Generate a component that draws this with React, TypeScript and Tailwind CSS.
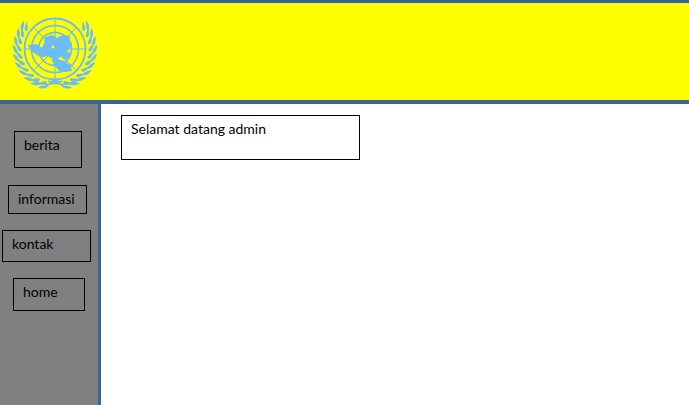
import React from 'react';

const BLUE = '#6cbcf5';
const CX = 55;
const CY = 46;

const polar = (r: number, deg: number) => {
  const rad = (deg * Math.PI) / 180;
  return `${CX + r * Math.cos(rad)} ${CY + r * Math.sin(rad)}`;
};

// one laurel branch, drawn on the left and mirrored for the right
const Branch: React.FC = () => {
  const angles = [106, 118, 130, 142, 154, 166, 178, 190, 202, 214];
  return (
    <g fill={BLUE}>
      {angles.map((a) => (
        <g key={a}>
          <path d={`M${polar(34, a)}Q${polar(36.5, a - 3)} ${polar(38, a + 8)}Q${polar(35.5, a + 5)} ${polar(34, a)}Z`} stroke={BLUE} strokeWidth={1.4} />
          <path d={`M${polar(38, a - 4)}Q${polar(41, a - 2)} ${polar(41.5, a + 6)}Q${polar(39.5, a + 4)} ${polar(38, a - 4)}Z`} stroke={BLUE} strokeWidth={1.4} />
        </g>
      ))}
    </g>
  );
};

const Emblem: React.FC = () => {
  const spokes = [0, 45, 90, 135, 180, 225, 270, 315];
  return (
    <svg width="110" height="96" viewBox="0 0 110 96" className="block">
      <Branch />
      <g transform="translate(110 0) scale(-1 1)">
        <Branch />
      </g>
      {/* stems crossing under the globe */}
      <path d="M32 77Q46 85 62 78M78 77Q64 85 48 78M45 85Q50 79 60 76M65 85Q60 79 50 76" fill="none" stroke={BLUE} strokeWidth={1.6} />
      <g fill="none" stroke={BLUE}>
        <circle cx={CX} cy={CY} r={30.5} strokeWidth={1.8} />
        <circle cx={CX} cy={CY} r={23.5} strokeWidth={1.6} />
        <circle cx={CX} cy={CY} r={16.5} strokeWidth={1.6} />
        <circle cx={CX} cy={CY} r={9} strokeWidth={1.5} />
        {spokes.map((a) => (
          <line
            key={a}
            x1={CX}
            y1={CY}
            x2={CX + 30 * Math.cos((a * Math.PI) / 180)}
            y2={CY + 30 * Math.sin((a * Math.PI) / 180)}
            strokeWidth={1}
          />
        ))}
      </g>
      {/* land masses, polar view */}
      <g transform="translate(0 -3)" fill={BLUE} stroke={BLUE} strokeWidth={2} strokeLinejoin="round">
        <path d="M29 46L36 45L42 49L45 44L46 38L52 36L57 39L63 36L69 37L68 42L71 43L69 48L65 50L70 55L65 59L61 55L57 56L58 61L53 58L48 55L43 56L37 54L32 50Z" />
        <path d="M53 60L62 61L69 65L71 70L66 71L60 70L55 65Z" />
      </g>
      <circle cx={53} cy={44} r={1.5} fill="#ffff00" />
    </svg>
  );
};

const navItems = [
  { label: 'berita', box: 'ml-[14px] mt-[27px] w-[68px] h-[37px] pl-[9px] pt-[3px]' },
  { label: 'informasi', box: 'ml-[8px] mt-[17px] w-[79px] h-[29px] pl-[9px] pt-[3px]' },
  { label: 'kontak', box: 'ml-[2px] mt-[16px] w-[89px] h-[32px] pl-[9px] pt-[3px]' },
  { label: 'home', box: 'ml-[13px] mt-[16px] w-[72px] h-[33px] pl-[9px] pt-[3px]' },
];

export default function App() {
  return (
    <div className="flex h-[405px] w-[689px] flex-col overflow-hidden bg-white font-['Lato','Open_Sans',sans-serif] text-[14px] leading-[20px] text-black">
      <header className="h-[104px] shrink-0 border-t-[3px] border-b-4 border-[#3a6496] bg-[#ffff00]">
        <Emblem />
      </header>
      <div className="flex flex-1">
        <aside className="w-[101px] shrink-0 border-r-[3px] border-[#3a6496] bg-[#808080]">
          {navItems.map((item) => (
            <div key={item.label} className={`${item.box} border border-black`}>
              {item.label}
            </div>
          ))}
        </aside>
        <main className="flex-1 pl-[20px] pt-[11px]">
          <div className="h-[45px] w-[239px] border border-black pl-[9px] pt-[3px]">Selamat datang admin</div>
        </main>
      </div>
    </div>
  );
}
